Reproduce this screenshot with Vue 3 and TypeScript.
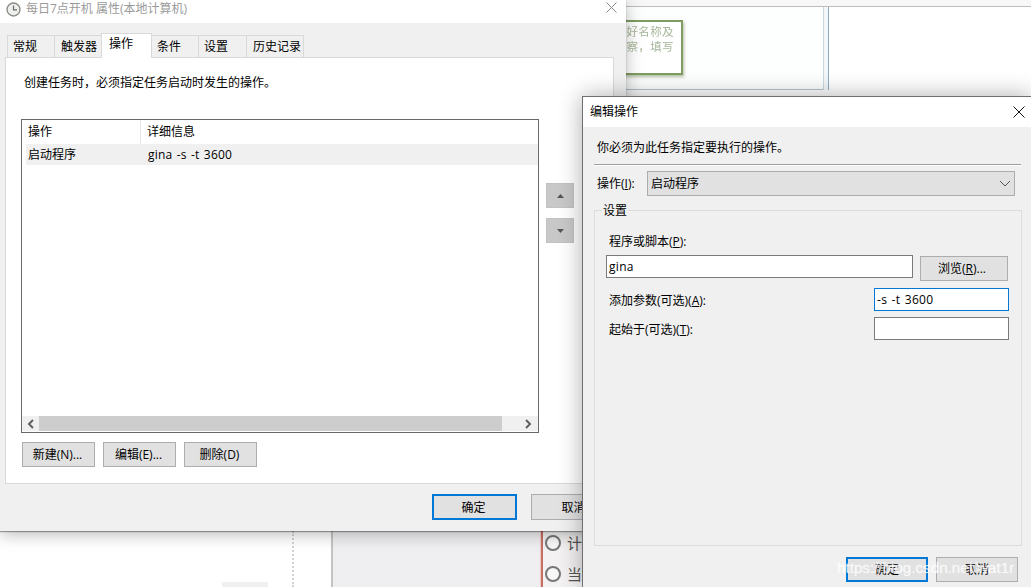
<script setup lang="ts">
const tabs: string[] = ['常规', '触发器', '操作', '条件', '设置', '历史记录']
const tabWidths: number[] = [47, 47, 51, 46, 48, 58]
</script>

<template>
  <div class="desk">
    <!-- backdrop document -->
    <div class="bg-top"></div>
    <div class="bg-card">
      <div class="note">
        <p>好名称及</p>
        <p>察，填写</p>
      </div>
    </div>
    <div class="bg-dots"></div>
    <div class="bg-chip"></div>
    <div class="bg-main">
      <div class="bg-side">
        <div class="opt"><i></i><span>计划</span></div>
        <div class="opt"><i></i><span>当前</span></div>
      </div>
    </div>

    <!-- properties window -->
    <section class="win one">
      <header class="title-one">
        <svg class="clock" width="15" height="15" viewBox="0 0 15 15">
          <circle cx="7.5" cy="7.5" r="6.5" fill="#eef0ee" stroke="#8d8d85" stroke-width="1.4" />
          <path d="M7.5 3.5V7.8H11" fill="none" stroke="#6a6a66" stroke-width="1.2" />
        </svg>
        <span class="title-text">每日7点开机 属性(本地计算机)</span>
        <svg class="close-one" width="11" height="11" viewBox="0 0 11 11">
          <path d="M.5.5l10 10M10.5.5l-10 10" stroke="#8a8a8a" stroke-width="1" fill="none" />
        </svg>
      </header>
      <div class="body-one">
        <div class="tabs">
          <div
            v-for="(t, i) in tabs"
            :key="t"
            class="tab"
            :class="{ active: i === 2 }"
            :style="{ width: tabWidths[i] + 'px' }"
          >{{ t }}</div>
        </div>
        <div class="panel">
          <p class="hint">创建任务时，必须指定任务启动时发生的操作。</p>
          <div class="list-row">
            <div class="list">
              <div class="list-head">
                <div class="col-a">操作</div>
                <div class="col-b">详细信息</div>
              </div>
              <div class="list-item">
                <div class="col-a2">启动程序</div>
                <div class="col-b2">gina -s -t 3600</div>
              </div>
              <div class="hscroll">
                <div class="sc-btn">
                  <svg width="8" height="10" viewBox="0 0 8 10"><path d="M6 1L2 5l4 4" fill="none" stroke="#606060" stroke-width="2" /></svg>
                </div>
                <div class="sc-thumb"></div>
                <div class="sc-btn end">
                  <svg width="8" height="10" viewBox="0 0 8 10"><path d="M2 1l4 4-4 4" fill="none" stroke="#606060" stroke-width="2" /></svg>
                </div>
              </div>
            </div>
            <div class="movers">
              <button class="mover">
                <svg width="7" height="4" viewBox="0 0 7 4"><path d="M3.5 0L7 4H0z" fill="#555" /></svg>
              </button>
              <button class="mover">
                <svg width="7" height="4" viewBox="0 0 7 4"><path d="M0 0h7L3.5 4z" fill="#555" /></svg>
              </button>
            </div>
          </div>
          <div class="actions">
            <button class="btn act">新建(N)...</button>
            <button class="btn act">编辑(E)...</button>
            <button class="btn act">删除(D)</button>
          </div>
        </div>
        <div class="footer-one">
          <button class="btn ok-one">确定</button>
          <button class="btn cancel-one">取消</button>
        </div>
      </div>
    </section>

    <!-- edit action window -->
    <section class="win two">
      <header class="title-two">
        <span>编辑操作</span>
        <svg width="12" height="12" viewBox="0 0 12 12">
          <path d="M.5.5l11 11M11.5.5l-11 11" stroke="#111" stroke-width="1" fill="none" />
        </svg>
      </header>
      <div class="body-two">
        <p class="must">你必须为此任务指定要执行的操作。</p>
        <div class="sep"></div>
        <div class="action-row">
          <label class="action-label">操作(<u>I</u>):</label>
          <div class="select">
            <span>启动程序</span>
            <svg width="12" height="7" viewBox="0 0 12 7"><path d="M1 1l5 5 5-5" fill="none" stroke="#555" stroke-width="1" /></svg>
          </div>
        </div>
        <div class="group">
          <div class="legend">设置</div>
          <div class="field-label">程序或脚本(<u>P</u>):</div>
          <div class="prog-row">
            <div class="input prog">gina</div>
            <button class="btn browse">浏览(<u>R</u>)...</button>
          </div>
          <div class="arg-row first">
            <div class="arg-label">添加参数(可选)(<u>A</u>):</div>
            <div class="input arg focus">-s -t 3600</div>
          </div>
          <div class="arg-row">
            <div class="arg-label">起始于(可选)(<u>T</u>):</div>
            <div class="input arg"></div>
          </div>
        </div>
        <div class="footer-two">
          <button class="btn ok-two">确定</button>
          <button class="btn cancel-two">取消</button>
        </div>
      </div>
      <div class="watermark">https://blog.csdn.net/wat1r</div>
    </section>
  </div>
</template>

<style>
html, body { margin: 0; background: #fff; }
</style>

<style scoped>
* { box-sizing: border-box; }
p { margin: 0; }
.desk {
  position: relative;
  width: 1031px;
  height: 587px;
  overflow: hidden;
  background: #fff;
  font: 12px/17px "Open Sans", "Noto Sans CJK SC", sans-serif;
  color: #000;
}
/* ---------- backdrop ---------- */
.bg-top {
  position: absolute; left: 600px; right: 0; top: 0; height: 7px;
  background: #f7f7f7; border-bottom: 1px solid #bdbdbd;
}
.bg-card {
  position: absolute; left: 600px; top: 7px; width: 229px; height: 83px;
  background: #fdfefe;
  border-right: 1px solid #8fa9be;
  box-shadow: inset -4px 0 0 #f4f7f9, inset -5px 0 0 #c9d7e2, inset 0 -1px 0 #b6c4d1;
}
.note {
  position: absolute; left: 0; top: 13px; width: 83px; height: 55px;
  background: #fff;
  border: 2px solid #7f9c62;
  box-shadow: 1px 2px 3px rgba(90, 120, 60, .45);
  padding: 2px 7px 0 0;
  text-align: right;
  font-size: 11.5px;
  line-height: 15px;
  letter-spacing: .4px;
  color: #a7b79a;
  filter: blur(.3px);
}
.bg-dots {
  position: absolute; left: 292px; top: 531px; height: 56px; width: 0;
  border-left: 2px dotted #d4d4d4;
}
.bg-chip {
  position: absolute; left: 222px; top: 582px; width: 46px; height: 5px; background: #f0f0f0;
}
.bg-main {
  position: absolute; left: 331px; top: 525px; width: 300px; height: 62px;
  background: #efeef1;
  border-left: 2px solid #c4c4c4;
}
.bg-side {
  position: absolute; left: 208px; top: 0; width: 90px; height: 62px;
  background: #f3f1f1;
  border-left: 2px solid #c56f66;
  box-shadow: -1px 0 1px #f0cfcb;
  padding: 10px 0 0 2px;
  display: flex; flex-direction: column; gap: 15px;
}
.opt { display: flex; align-items: center; gap: 6px; height: 16px; font-size: 15px; color: #555; }
.opt i {
  width: 16px; height: 16px; flex: none; border-radius: 50%;
  border: 2px solid #777; background: #f7f7f7;
}
/* ---------- windows ---------- */
.win { position: absolute; background: #f0f0f0; }
.one {
  left: 0; top: 0; width: 626px; height: 531px;
  box-shadow: 0 1px 1px rgba(0, 0, 0, .35), 0 3px 16px rgba(0, 0, 0, .28);
  display: flex; flex-direction: column;
}
.title-one {
  height: 23px; flex: none; background: #fff;
  display: flex; align-items: flex-start;
  padding: 1px 9px 0 6px;
}
.clock { flex: none; margin-top: 1px; }
.title-text { margin-left: 5px; color: #9a9a9a; line-height: 15px; }
.close-one { margin-left: auto; margin-top: 1px; }
.body-one { flex: 1; padding: 10px 12px 0 5px; display: flex; flex-direction: column; }
.tabs { display: flex; align-items: flex-end; height: 25px; padding-left: 2px; flex: none; position: relative; z-index: 1; }
.tab {
  height: 22px; margin-bottom: 1px;
  background: #f0f0f0;
  border: 1px solid #d9d9d9; border-bottom: 0; border-right-width: 0;
  padding: 2px 0 0 5px;
  white-space: nowrap;
}
.tab:nth-child(2), .tab:nth-child(6) { padding-left: 6px; }
.tab:last-child { border-right-width: 1px; }
.tab.active {
  height: 25px; margin-bottom: 0;
  background: #fff; border-right-width: 1px;
  padding: 1px 0 0 7px;
}
.tab.active + .tab { border-left-width: 0; }
.panel {
  height: 427px; margin-top: -1px; flex: none;
  background: #fff; border: 1px solid #d9d9d9;
  padding: 16px 0 0 15px;
}
.hint { height: 17px; margin-left: 3px; }
.list-row { display: flex; margin-top: 28px; }
.list {
  width: 518px; height: 314px;
  border: 1px solid #696969;
  display: flex; flex-direction: column;
  padding-bottom: 1px;
}
.list-head { display: flex; height: 24px; flex: none; line-height: 23px; }
.col-a { width: 119px; padding-left: 6px; border-right: 1px solid #e5e5e5; }
.col-b { padding-left: 6px; }
.list-item {
  display: flex; height: 21px; flex: none; margin-left: 4px;
  background: #f0f0f0; line-height: 21px;
}
.col-a2 { width: 122px; padding-left: 2px; flex: none; }
.col-b2 { letter-spacing: .2px; word-spacing: 1px; }
.hscroll { margin-top: auto; display: flex; height: 15px; background: #f0f0f0; }
.sc-btn { width: 17px; display: flex; align-items: center; justify-content: center; flex: none; }
.sc-btn.end { margin-left: auto; width: 19px; justify-content: flex-start; padding-left: 5px; }
.sc-thumb { width: 463px; background: #cdcdcd; }
.movers { display: flex; flex-direction: column; gap: 10px; margin: 64px 0 0 7px; }
.mover {
  width: 28px; height: 25px; padding: 0;
  background: #c8c8c8; border: 1px solid #c2c2c2;
  display: flex; align-items: center; justify-content: center;
}
.actions { display: flex; gap: 8px; margin: 9px 0 0 1px; }
.btn {
  background: #e1e1e1; border: 1px solid #adadad; padding: 0;
  font: inherit; color: #000; height: 25px;
}
.act { width: 73px; padding-right: 2px; }
.footer-one { display: flex; gap: 14px; margin: 10px 0 0 427px; }
.ok-one { width: 85px; height: 26px; flex: none; border: 2px solid #0078d7; padding-right: 2px; }
.cancel-one { width: 85px; height: 26px; flex: none; }
/* ---------- edit window ---------- */
.two {
  left: 582px; top: 96px; width: 449px; height: 491px;
  border-left: 1px solid #6f6f6f; border-top: 1px solid #6f6f6f;
  box-shadow: 0 0 22px rgba(0, 0, 0, .32);
  display: flex; flex-direction: column;
}
.title-two {
  height: 30px; flex: none; background: #fff;
  display: flex; align-items: center; justify-content: space-between;
  padding: 0 6px 1px 7px;
}
.body-two { flex: 1; display: flex; flex-direction: column; }
.must { height: 17px; margin: 12px 0 0 14px; }
.sep {
  width: 427px; height: 2px; margin: 8px 0 0 11px; flex: none;
  border-top: 1px solid #a0a0a0; border-bottom: 1px solid #fff;
}
.action-row { display: flex; align-items: center; height: 25px; margin-top: 5px; padding-left: 14px; flex: none; }
.action-label { width: 50px; flex: none; }
.select {
  width: 368px; height: 25px;
  background: #e1e1e1; border: 1px solid #adadad;
  display: flex; align-items: center; justify-content: space-between;
  padding: 0 3px 0 3px;
}
.group {
  width: 428px; height: 336px; margin: 14px 0 0 11px; flex: none;
  border: 1px solid #dcdcdc;
  padding-left: 11px;
}
.legend { width: fit-content; height: 17px; margin: -9px 0 0 -4px; padding: 0 1px; background: #f0f0f0; }
.field-label { height: 17px; margin: 14px 0 0 3px; }
.prog-row { display: flex; align-items: flex-start; height: 26px; margin-top: 5px; gap: 7px; }
.input {
  height: 23px; background: #fff; border: 1px solid #7a7a7a;
  line-height: 21px; padding-left: 2px;
}
.prog { width: 307px; letter-spacing: .3px; }
.browse { width: 88px; margin-top: 1px; padding-right: 4px; }
.arg-row { display: flex; align-items: center; height: 23px; margin-top: 6px; padding-left: 3px; }
.arg-row.first { margin-top: 7px; }
.arg-label { width: 265px; flex: none; padding-top: 2px; }
.arg { width: 135px; letter-spacing: .3px; word-spacing: 1px; }
.focus { border-color: #0078d7; }
.footer-two { display: flex; gap: 8px; margin: 11px 0 0 263px; }
.ok-two { width: 82px; border: 2px solid #0078d7; }
.cancel-two { width: 82px; }
.watermark {
  position: absolute; left: 254px; top: 461px;
  font: 15.2px/20px "Liberation Sans", sans-serif;
  color: rgba(255, 255, 255, .68);
  text-shadow: 0 0 1px rgba(255, 255, 255, .6);
  white-space: nowrap;
}
</style>
